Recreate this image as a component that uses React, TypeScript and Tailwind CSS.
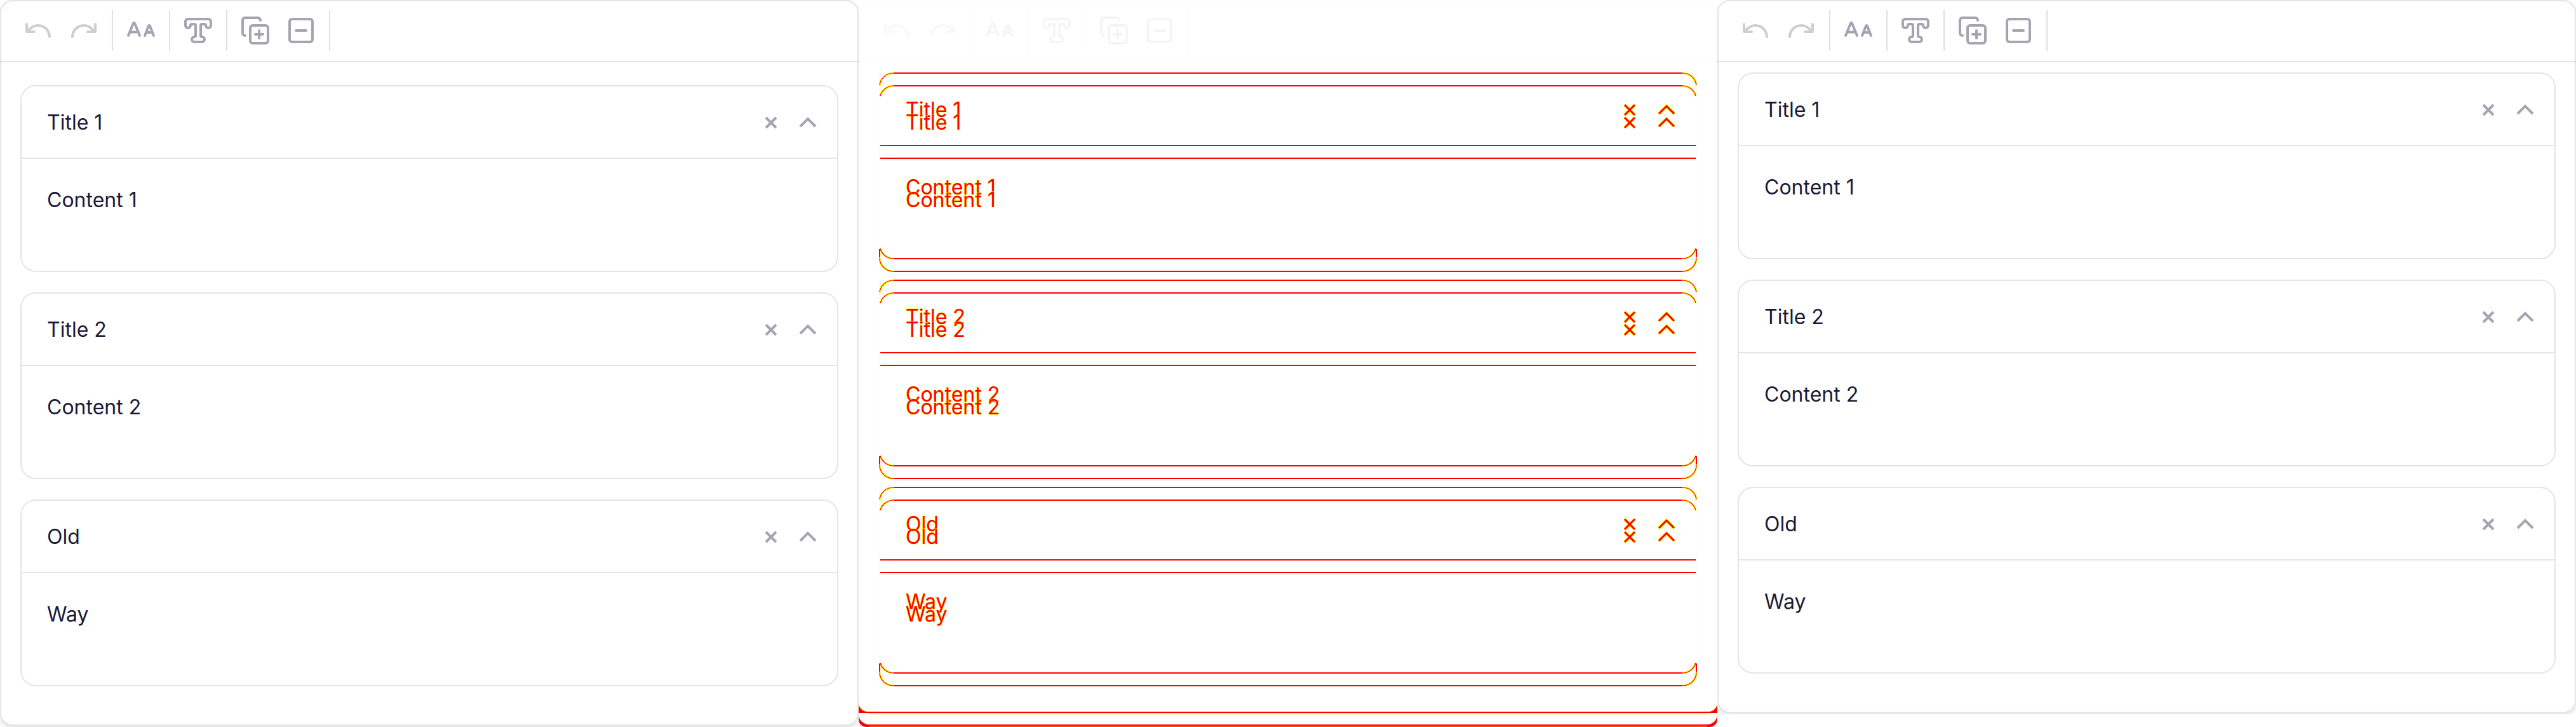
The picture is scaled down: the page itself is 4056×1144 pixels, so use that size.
import type { ReactNode } from "react";

type Item = { title: string; content: string };

const items: Item[] = [
  { title: "Title 1", content: "Content 1" },
  { title: "Title 2", content: "Content 2" },
  { title: "Old", content: "Way" },
];

function ToolButton({ label, disabled, children }: { label: string; disabled?: boolean; children: ReactNode }) {
  return (
    <button
      type="button"
      aria-label={label}
      disabled={disabled}
      className="flex h-16 w-[72px] items-center justify-center text-[#a5a5b2] disabled:text-[#cdcdd3]"
    >
      <svg
        viewBox="0 0 48 48"
        className="size-12"
        fill="none"
        stroke="currentColor"
        strokeWidth="4"
        strokeLinecap="round"
        strokeLinejoin="round"
      >
        {children}
      </svg>
    </button>
  );
}

function ToolGroup({ children }: { children: ReactNode }) {
  return <div className="flex border-r-2 border-black/12 px-2">{children}</div>;
}

function Toolbar() {
  return (
    <div role="toolbar" className="-mx-0.5 flex border-b-2 border-black/10 px-4 pt-3.5 pb-4">
      <ToolGroup>
        <ToolButton label="Undo" disabled>
          <path d="M6 14V26H18M6 26L11.3 21.3A18 18 0 0 1 42 34" />
        </ToolButton>
        <ToolButton label="Redo" disabled>
          <path d="M42 14V26H30M42 26L36.7 21.3A18 18 0 0 0 6 34" />
        </ToolButton>
      </ToolGroup>
      <ToolGroup>
        <ToolButton label="Font size">
          <path d="M4 32L12 12.5Q13 11 14 12.5L22 32M7 26.5H19M30 32L36 17Q37 15 38 17L44 32M33 27H41" />
        </ToolButton>
      </ToolGroup>
      <ToolGroup>
        <ToolButton label="Text style">
          <path d="M8 6H40a4 4 0 0 1 4 4V16a4 4 0 0 1-8 0a2 2 0 0 0-2-2H30a2 2 0 0 0-2 2V32a2 2 0 0 0 2 2a4 4 0 0 1 0 8H18a4 4 0 0 1 0-8a2 2 0 0 0 2-2V16a2 2 0 0 0-2-2H14a2 2 0 0 0-2 2a4 4 0 0 1-8 0V10a4 4 0 0 1 4-4z" />
        </ToolButton>
      </ToolGroup>
      <ToolGroup>
        <ToolButton label="Add item">
          <rect x="16" y="16" width="28" height="28" rx="4" />
          <path d="M30 24V36M24 30H36M8 32a4 4 0 0 1-4-4V8a4 4 0 0 1 4-4H28a4 4 0 0 1 4 4" />
        </ToolButton>
        <ToolButton label="Collapse all">
          <rect x="6" y="6" width="36" height="36" rx="4" />
          <path d="M16 24H32" />
        </ToolButton>
      </ToolGroup>
    </div>
  );
}

function CardActions({ className, fringe }: { className: string; fringe?: boolean }) {
  const close = "M2 2L18 18M18 2L2 18";
  const chevron = "M2 16L14 4L26 16";
  return (
    <div className={"flex items-center " + className}>
      <button type="button" aria-label="Remove" className="px-[34px] py-2">
        <svg viewBox="0 0 20 20" className="size-5" fill="none">
          {fringe && <path d={close} stroke="#ffff00" strokeWidth="5" />}
          <path d={close} stroke="currentColor" strokeWidth={fringe ? 3 : 4} />
        </svg>
      </button>
      <button type="button" aria-label="Collapse" className="py-2">
        <svg viewBox="0 0 28 20" className="h-5 w-7" fill="none">
          {fringe && <path d={chevron} stroke="#ffff00" strokeWidth="5" />}
          <path d={chevron} stroke="currentColor" strokeWidth={fringe ? 3 : 4} />
        </svg>
      </button>
    </div>
  );
}

function Card({ item }: { item: Item }) {
  return (
    <section className="rounded-3xl border-2 border-[#e5e5e5]">
      <header className="flex h-[114px] items-center justify-between border-b-2 border-[#e5e5e5] pt-0.5 pr-8 pl-10">
        <h2>{item.title}</h2>
        <CardActions className="text-[#a5a5b2]" />
      </header>
      <p className="h-44 px-10 pt-[41px]">{item.content}</p>
    </section>
  );
}

function EditorPanel({ className }: { className: string }) {
  return (
    <div className="overflow-hidden pb-0.5">
      <article className="rounded-[20px] border-2 border-black/10 shadow-[0_4px_8px_rgba(0,0,0,0.12)]">
        <Toolbar />
        <div className={"flex flex-col gap-8 px-[30px] pb-15 " + className}>
          {items.map((item) => (
            <Card key={item.title} item={item} />
          ))}
        </div>
      </article>
    </div>
  );
}

function Corner({ className, tail }: { className: string; tail: boolean }) {
  return (
    <svg viewBox="0 0 24 36" className={"absolute h-9 w-6 " + className} fill="none">
      <path d={tail ? "M1 22A22 21 0 0 1 23 1" : "M2 17A22 21 0 0 1 23 1"} stroke="#ffff00" strokeWidth="3" />
      <path d={tail ? "M1 22A22 21 0 0 1 23 1" : "M2 17A22 21 0 0 1 23 1"} stroke="#ff0000" strokeWidth="1.2" />
      {tail && <path d="M1 23V36" stroke="#ff0000" strokeWidth="2" />}
    </svg>
  );
}

function DiffCard({ item, upper }: { item: Item; upper: boolean }) {
  return (
    <section className="relative border-x-2 border-[#fbfbfb]">
      <Corner className="top-0 -left-0.5" tail={upper} />
      <Corner className="top-0 -right-0.5 -scale-x-100" tail={upper} />
      <Corner className="bottom-0 -left-0.5 -scale-y-100" tail={!upper} />
      <Corner className="-right-0.5 bottom-0 -scale-100" tail={!upper} />
      <div className="mx-5 h-0.5 bg-[#ff0000]" />
      <header className="flex h-[114px] items-center justify-between border-b-2 border-[#ff0000] pt-0.5 pr-8 pl-10">
        <h2>{item.title}</h2>
        <CardActions className="text-[#ff0000]" fringe />
      </header>
      <p className="h-44 px-10 pt-[41px]">{item.content}</p>
      <div className="mx-5 h-0.5 bg-[#ff0000]" />
    </section>
  );
}

function DiffStack({ upper, className }: { upper: boolean; className: string }) {
  return (
    <div className={"col-start-1 row-start-1 flex flex-col gap-8 px-8 " + className}>
      {items.map((item) => (
        <DiffCard key={item.title} item={item} upper={upper} />
      ))}
    </div>
  );
}

function DiffPanel() {
  return (
    <div>
      <div className="rounded-t-[20px] border-2 border-b-0 border-black/10 opacity-10">
        <Toolbar />
      </div>
      <div className="grid pb-[26px] text-[#ff0000] [-webkit-text-stroke:1px_#ffff00] [paint-order:stroke]">
        <DiffStack upper className="pt-4" />
        <DiffStack upper={false} className="pt-9" />
      </div>
      <div className="bg-[#ff0000]">
        <div className="h-3.5 rounded-b-2xl border-b border-[#ffff00] bg-white" />
        <div className="h-0.5" />
        <div className="flex h-0.5 bg-white">
          <div className="mx-4 flex-1 bg-[#ffff00]" />
        </div>
      </div>
      <div className="overflow-hidden rounded-b-xl bg-[#ff0000] pb-px">
        <div className="h-4 rounded-b-2xl bg-white" />
        <div className="h-0.5" />
        <div className="mx-4 h-px bg-[#ffff00]" />
      </div>
    </div>
  );
}

export default function App() {
  return (
    <main className="grid grid-cols-3 items-start bg-white font-[Inter,sans-serif] text-[32px] leading-12 text-[#1a1a37]">
      <EditorPanel className="pt-9" />
      <DiffPanel />
      <EditorPanel className="pt-4" />
    </main>
  );
}
